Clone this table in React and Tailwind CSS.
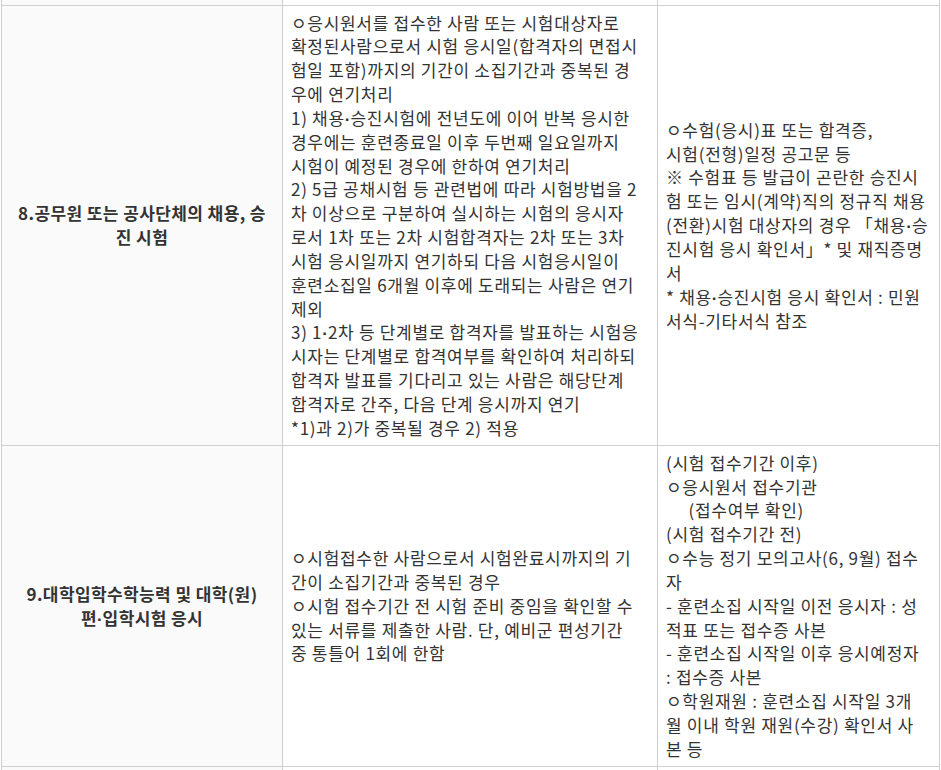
const dot = <span className="font-['Liberation_Sans',sans-serif] font-bold tracking-normal">·</span>

const rows = [
  {
    title: ['8.공무원 또는 공사단체의 채용, 승', '진 시험'],
    detail: [
      'ㅇ응시원서를 접수한 사람 또는 시험대상자로',
      '확정된사람으로서 시험 응시일(합격자의 면접시',
      '험일 포함)까지의 기간이 소집기간과 중복된 경',
      '우에 연기처리',
      ['1) 채용', dot, '승진시험에 전년도에 이어 반복 응시한'],
      '경우에는 훈련종료일 이후 두번째 일요일까지',
      '시험이 예정된 경우에 한하여 연기처리',
      '2) 5급 공채시험 등 관련법에 따라 시험방법을 2',
      '차 이상으로 구분하여 실시하는 시험의 응시자',
      '로서 1차 또는 2차 시험합격자는 2차 또는 3차',
      '시험 응시일까지 연기하되 다음 시험응시일이',
      '훈련소집일 6개월 이후에 도래되는 사람은 연기',
      '제외',
      ['3) 1', dot, '2차 등 단계별로 합격자를 발표하는 시험응'],
      '시자는 단계별로 합격여부를 확인하여 처리하되',
      '합격자 발표를 기다리고 있는 사람은 해당단계',
      '합격자로 간주, 다음 단계 응시까지 연기',
      '*1)과 2)가 중복될 경우 2) 적용',
    ],
    docs: [
      'ㅇ수험(응시)표 또는 합격증,',
      '시험(전형)일정 공고문 등',
      '※ 수험표 등 발급이 곤란한 승진시',
      '험 또는 임시(계약)직의 정규직 채용',
      ['(전환)시험 대상자의 경우 「채용', dot, '승'],
      '진시험 응시 확인서」* 및 재직증명',
      '서',
      ['* 채용', dot, '승진시험 응시 확인서 : 민원'],
      '서식-기타서식 참조',
    ],
    docsAlign: 'align-middle',
  },
  {
    title: ['9.대학입학수학능력 및 대학(원)', ['편', dot, '입학시험 응시']],
    detail: [
      'ㅇ시험접수한 사람으로서 시험완료시까지의 기',
      '간이 소집기간과 중복된 경우',
      'ㅇ시험 접수기간 전 시험 준비 중임을 확인할 수',
      '있는 서류를 제출한 사람. 단, 예비군 편성기간',
      '중 통틀어 1회에 한함',
    ],
    docs: [
      '(시험 접수기간 이후)',
      'ㅇ응시원서 접수기관',
      '\u00a0\u00a0\u00a0\u00a0\u00a0(접수여부 확인)',
      '(시험 접수기간 전)',
      'ㅇ수능 정기 모의고사(6, 9월) 접수',
      '자',
      '- 훈련소집 시작일 이전 응시자 : 성',
      '적표 또는 접수증 사본',
      '- 훈련소집 시작일 이후 응시예정자',
      ': 접수증 사본',
      'ㅇ학원재원 : 훈련소집 시작일 3개',
      '월 이내 학원 재원(수강) 확인서 사',
      '본 등',
    ],
    docsAlign: 'align-top',
  },
]

function Lines({ lines }) {
  return lines.map((line, i) => (
    <div key={i} className="h-[23.85px] whitespace-pre">
      {Array.isArray(line) ? line.map((part, j) => <span key={j}>{part}</span>) : line}
    </div>
  ))
}

export default function App() {
  return (
    <div className="min-h-screen bg-white pl-px pr-[2px] text-[#333] text-[17px] tracking-[0.7px] leading-[23.85px] font-['Noto_Sans_CJK_KR',sans-serif]">
      <table className="w-[938px] table-fixed border-collapse">
        <colgroup>
          <col className="w-[281px]" />
          <col className="w-[375px]" />
          <col className="w-[282px]" />
        </colgroup>
        <tbody>
          <tr className="h-[5px]">
            <td className="border-x border-b border-[#cfcfcf] bg-[#fafafa]"></td>
            <td className="border-x border-b border-[#cfcfcf]"></td>
            <td className="border-x border-b border-[#cfcfcf]"></td>
          </tr>
          {rows.map((row, i) => (
            <tr key={i}>
              <td className="border border-[#cfcfcf] bg-[#fafafa] px-2 text-center align-middle font-bold tracking-[0.4px]">
                <Lines lines={row.title} />
              </td>
              <td className="border border-[#cfcfcf] px-2 pt-[5px] pb-[5px] align-middle">
                <Lines lines={row.detail} />
              </td>
              <td className={`border border-[#cfcfcf] px-2 pt-[5px] pb-[5px] ${row.docsAlign}`}>
                <Lines lines={row.docs} />
              </td>
            </tr>
          ))}
          <tr className="h-[4px]">
            <td className="border-x border-t border-[#cfcfcf] bg-[#fafafa]"></td>
            <td className="border-x border-t border-[#cfcfcf]"></td>
            <td className="border-x border-t border-[#cfcfcf]"></td>
          </tr>
        </tbody>
      </table>
    </div>
  )
}
